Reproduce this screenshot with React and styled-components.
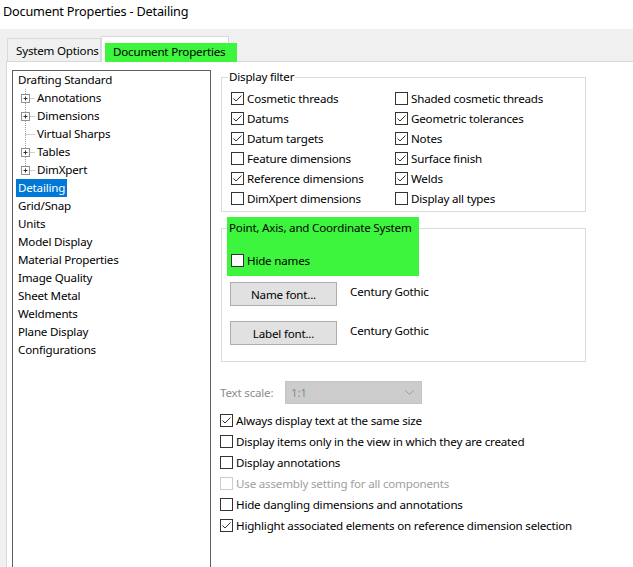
import React from 'react';
import styled, { createGlobalStyle } from 'styled-components';

const GlobalStyle = createGlobalStyle`
  html, body {
    margin: 0;
    padding: 0;
    background: #f0f0f0;
    overflow: hidden;
  }
  body {
    font-family: "Segoe UI", "Noto Sans", "Open Sans", sans-serif;
    font-size: 11.6px;
    letter-spacing: -0.2px;
    color: #000;
  }
`;

const treeItems = [
  { label: 'Drafting Standard' },
  { label: 'Annotations', child: true, expand: true },
  { label: 'Dimensions', child: true, expand: true },
  { label: 'Virtual Sharps', child: true },
  { label: 'Tables', child: true, expand: true },
  { label: 'DimXpert', child: true, expand: true, last: true },
  { label: 'Detailing', selected: true },
  { label: 'Grid/Snap' },
  { label: 'Units' },
  { label: 'Model Display' },
  { label: 'Material Properties' },
  { label: 'Image Quality' },
  { label: 'Sheet Metal' },
  { label: 'Weldments' },
  { label: 'Plane Display' },
  { label: 'Configurations' },
];

const filters = [
  ['Cosmetic threads', true],
  ['Shaded cosmetic threads', false],
  ['Datums', true],
  ['Geometric tolerances', true],
  ['Datum targets', true],
  ['Notes', true],
  ['Feature dimensions', false],
  ['Surface finish', true],
  ['Reference dimensions', true],
  ['Welds', true],
  ['DimXpert dimensions', false],
  ['Display all types', false],
];

const options = [
  { label: 'Always display text at the same size', checked: true },
  { label: 'Display items only in the view in which they are created' },
  { label: 'Display annotations' },
  { label: 'Use assembly setting for all components', disabled: true },
  { label: 'Hide dangling dimensions and annotations' },
  { label: 'Highlight associated elements on reference dimension selection', checked: true },
];

const Check = ({ checked, disabled }) => (
  <Box disabled={disabled}>
    {checked && (
      <svg width="11" height="11" viewBox="0 0 11 11">
        <polyline points="1.5,5.5 4,8 9.5,2.5" fill="none" stroke="#333" strokeWidth="1" />
      </svg>
    )}
  </Box>
);

// dotted tree connector with the +/- expander box
const Connector = ({ expand, last }) => (
  <svg width="22" height="18" viewBox="0 0 22 18">
    <line x1="12.5" y1="0" x2="12.5" y2={last ? 9 : 18} stroke="#a0a0a0" strokeDasharray="1 1" />
    <line x1="12.5" y1="9.5" x2="22" y2="9.5" stroke="#a0a0a0" strokeDasharray="1 1" />
    {expand && (
      <>
        <rect x="8.5" y="5.5" width="8" height="8" fill="#fff" stroke="#919191" />
        <line x1="10.5" y1="9.5" x2="14.5" y2="9.5" stroke="#333" />
        <line x1="12.5" y1="7.5" x2="12.5" y2="11.5" stroke="#333" />
      </>
    )}
  </svg>
);

export default function App() {
  return (
    <Window>
      <GlobalStyle />
      <TitleBar>Document Properties - Detailing</TitleBar>
      <TabStrip>
        <Tab>System Options</Tab>
        <Tab active>
          <Marker>Document Properties</Marker>
        </Tab>
      </TabStrip>
      <Panel>
        <Tree>
          {treeItems.map((t) => (
            <TreeRow key={t.label} child={t.child}>
              {t.child && <Connector expand={t.expand} last={t.last} />}
              <TreeLabel selected={t.selected}>{t.label}</TreeLabel>
            </TreeRow>
          ))}
        </Tree>
        <Content>
          <Group height={135}>
            <Legend>Display filter</Legend>
            <FilterGrid>
              {filters.map(([label, checked]) => (
                <CheckRow key={label}>
                  <Check checked={checked} />
                  <span>{label}</span>
                </CheckRow>
              ))}
            </FilterGrid>
          </Group>
          <Group height={134} top={16}>
            <GreenBlock>
              <GreenTitle>Point, Axis, and Coordinate System</GreenTitle>
              <CheckRow>
                <Check />
                <span>Hide names</span>
              </CheckRow>
            </GreenBlock>
            <FontRows>
              <FontRow>
                <Button>Name font...</Button>
                <span>Century Gothic</span>
              </FontRow>
              <FontRow>
                <Button>Label font...</Button>
                <span>Century Gothic</span>
              </FontRow>
            </FontRows>
          </Group>
          <ScaleRow>
            <ScaleLabel>Text scale:</ScaleLabel>
            <Combo>
              <span>1:1</span>
              <svg width="9" height="6" viewBox="0 0 9 6">
                <polyline points="0.5,0.5 4.5,4.5 8.5,0.5" fill="none" stroke="#9a9a9a" />
              </svg>
            </Combo>
          </ScaleRow>
          <OptionList>
            {options.map((o) => (
              <OptionRow key={o.label} disabled={o.disabled}>
                <Check checked={o.checked} disabled={o.disabled} />
                <span>{o.label}</span>
              </OptionRow>
            ))}
          </OptionList>
        </Content>
      </Panel>
    </Window>
  );
}

const Window = styled.div`
  width: 633px;
  height: 567px;
  display: flex;
  flex-direction: column;
  overflow: hidden;
  & > * {
    flex-shrink: 0;
  }
`;

const TitleBar = styled.div`
  height: 29px;
  box-sizing: border-box;
  background: #fff;
  padding: 2px 0 0 3px;
  font-size: 12.7px;
  line-height: 18px;
`;

const TabStrip = styled.div`
  display: flex;
  align-items: flex-end;
  height: 25px;
  margin-top: 7px;
  padding-left: 7px;
  position: relative;
  z-index: 1;
`;

const Tab = styled.div`
  position: relative;
  box-sizing: border-box;
  height: ${({ active }) => (active ? '26px' : '23px')};
  margin-bottom: ${({ active }) => (active ? '-1px' : '0')};
  width: ${({ active }) => (active ? '128px' : '94px')};
  border: 1px solid #d9d9d9;
  border-bottom: none;
  background: ${({ active }) => (active ? '#fff' : '#f0f0f0')};
  padding: 4px 0 0 8px;
  line-height: 16px;
  white-space: nowrap;
`;

const Marker = styled.span`
  position: absolute;
  left: 3px;
  top: 6px;
  width: 132px;
  height: 19px;
  box-sizing: border-box;
  padding: 1px 0 0 8px;
  line-height: 16px;
  background: #3cf53c;
`;

const Panel = styled.div`
  flex: 1;
  display: flex;
  align-items: flex-start;
  margin-left: 6px;
  padding: 8px 0 0 5px;
  background: #fff;
  border-top: 1px solid #d9d9d9;
  border-left: 1px solid #d9d9d9;
`;

const Tree = styled.div`
  width: 199px;
  height: 520px;
  flex-shrink: 0;
  box-sizing: border-box;
  border: 1px solid #5f5f5f;
`;

const TreeRow = styled.div`
  display: flex;
  align-items: center;
  height: 18px;
  padding-left: ${({ child }) => (child ? '0' : '3px')};
`;

const TreeLabel = styled.span`
  padding: 0 2px;
  line-height: 18px;
  white-space: nowrap;
  background: ${({ selected }) => (selected ? '#0078d7' : 'transparent')};
  color: ${({ selected }) => (selected ? '#fff' : '#000')};
`;

const Content = styled.div`
  margin-left: 10px;
  display: flex;
  flex-direction: column;
`;

const Group = styled.div`
  position: relative;
  width: 365px;
  height: ${({ height }) => height}px;
  box-sizing: border-box;
  margin-top: ${({ top }) => (top ? `${top}px` : '7px')};
  border: 1px solid #dcdcdc;
`;

const Legend = styled.span`
  position: absolute;
  left: 6px;
  top: -9px;
  padding: 0 1px;
  background: #fff;
  line-height: 16px;
`;

const FilterGrid = styled.div`
  display: grid;
  grid-template-columns: 164px 1fr;
  grid-auto-rows: 20px;
  padding: 10px 0 0 9px;
`;

const CheckRow = styled.label`
  display: flex;
  align-items: center;
  gap: 3px;
  white-space: nowrap;
`;

const Box = styled.span`
  width: 13px;
  height: 13px;
  box-sizing: border-box;
  flex-shrink: 0;
  border: 1px solid ${({ disabled }) => (disabled ? '#cccccc' : '#333')};
  background: #fff;
  display: flex;
  align-items: center;
  justify-content: center;
`;

const GreenBlock = styled.div`
  position: absolute;
  left: 5px;
  top: -12px;
  width: 192px;
  height: 59px;
  box-sizing: border-box;
  background: #3cf53c;
  padding: 2px 0 0 2px;
  display: flex;
  flex-direction: column;
  gap: 16px;
  white-space: nowrap;
  & ${CheckRow} {
    padding-left: 2px;
  }
`;

const GreenTitle = styled.span`
  line-height: 18px;
`;

const FontRows = styled.div`
  display: flex;
  flex-direction: column;
  gap: 15px;
  padding: 53px 0 0 8px;
`;

const FontRow = styled.div`
  display: flex;
  align-items: flex-start;
  gap: 13px;
  & > span {
    line-height: 20px;
  }
`;

const Button = styled.button`
  width: 107px;
  height: 24px;
  box-sizing: border-box;
  border: 1px solid #adadad;
  background: #e1e1e1;
  font: inherit;
  letter-spacing: inherit;
  color: #000;
  padding: 0;
`;

const ScaleRow = styled.div`
  display: flex;
  align-items: center;
  margin-top: 19px;
`;

const ScaleLabel = styled.span`
  width: 65px;
  margin-left: -1px;
  color: #8d8d8d;
`;

const Combo = styled.div`
  width: 137px;
  height: 23px;
  box-sizing: border-box;
  background: #cccccc;
  border: 1px solid #c4c4c4;
  display: flex;
  align-items: center;
  justify-content: space-between;
  padding: 0 7px 0 5px;
  color: #8a8a8a;
`;

const OptionList = styled.div`
  display: flex;
  flex-direction: column;
  margin-top: 6px;
  margin-left: -1px;
`;

const OptionRow = styled(CheckRow)`
  height: 21px;
  color: ${({ disabled }) => (disabled ? '#a0a0a0' : '#000')};
`;
